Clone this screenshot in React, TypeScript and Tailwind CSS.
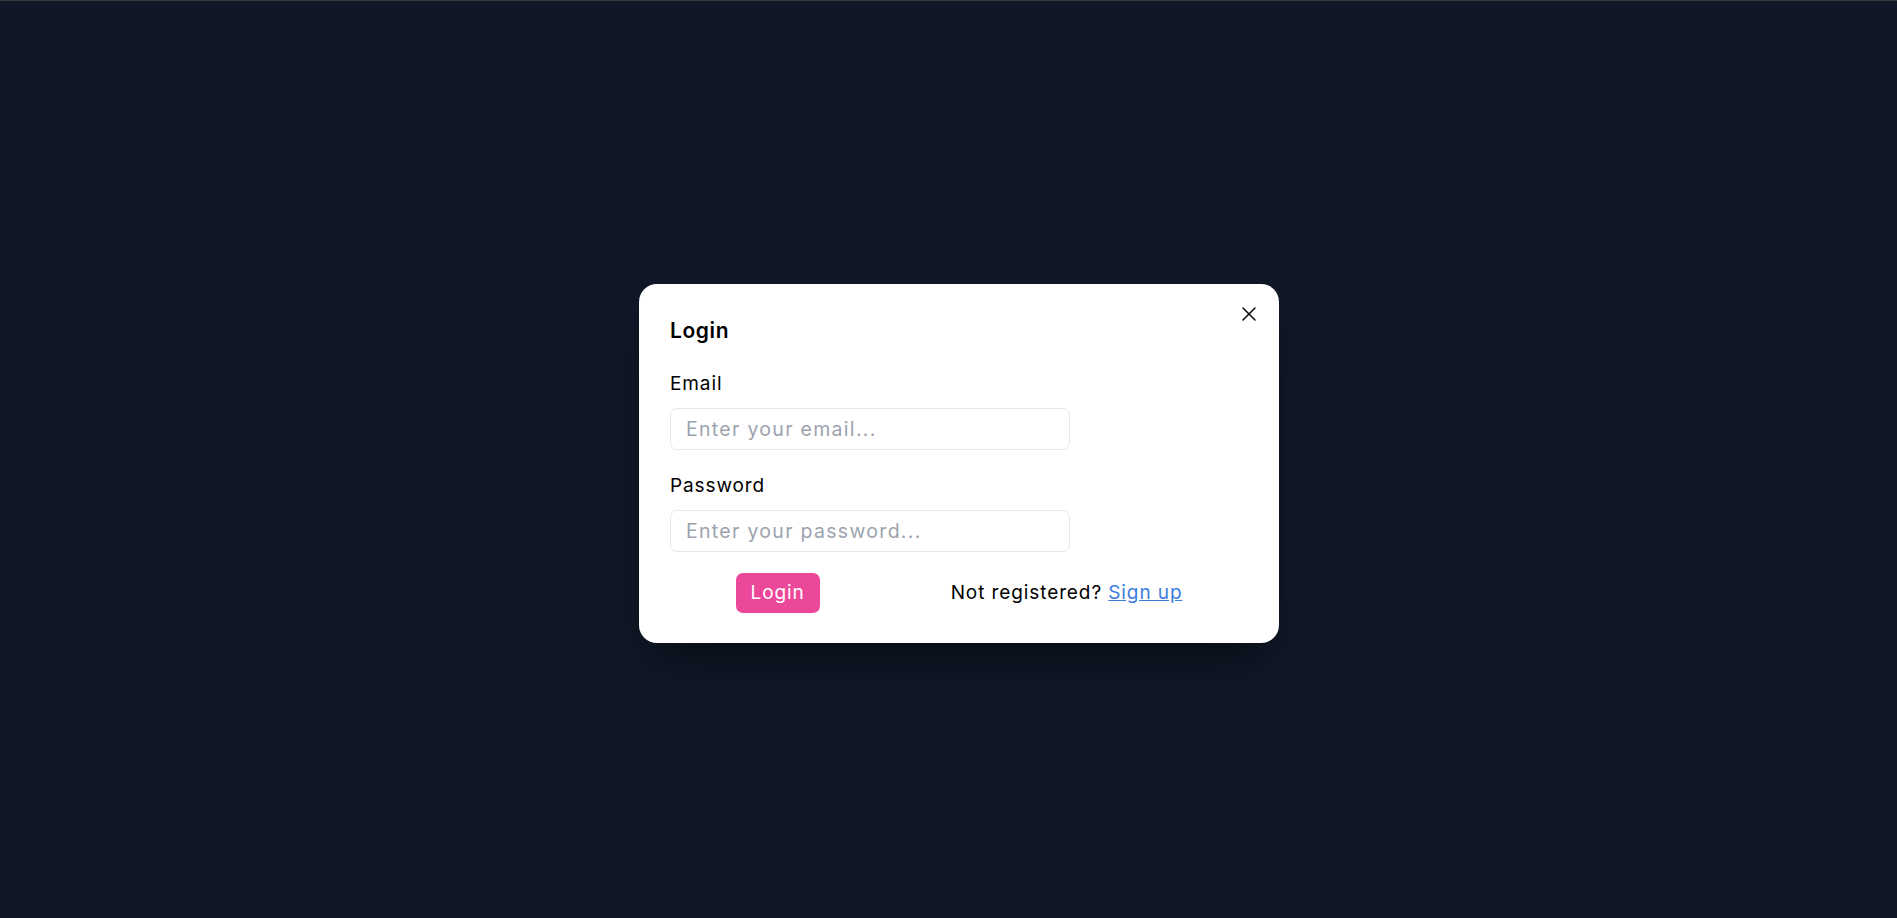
import React from "react";

function CloseIcon() {
  return (
    <svg width="16" height="16" viewBox="0 0 16 16" fill="none" stroke="#111111" strokeWidth="1.6" strokeLinecap="round">
      <path d="M2 2 L14 14" />
      <path d="M14 2 L2 14" />
    </svg>
  );
}

export default function App() {
  return (
    <div
      className="min-h-screen w-full bg-[#101828] flex flex-col"
      style={{ fontFamily: '"Inter", "Open Sans", sans-serif' }}
    >
      <div className="h-px w-full bg-[#3a3a3a]" />
      <div className="flex-1 flex items-center justify-center pl-[21px] pt-[7px]">
        <div className="relative w-[640px] bg-white rounded-[18px] px-[31px] pt-[31px] pb-[30px] shadow-[0_25px_50px_-12px_rgba(0,0,0,0.55)]">
          <button className="absolute top-[22px] right-[22px] w-[16px] h-[16px] flex items-center justify-center">
            <CloseIcon />
          </button>
          <h2 className="text-[21px] leading-[31px] font-semibold text-black tracking-[0.6px]">Login</h2>
          <div className="mt-[22px] flex flex-col">
            <label className="text-[19px] leading-[31px] text-black tracking-[0.9px]">Email</label>
            <input
              type="email"
              placeholder="Enter your email..."
              className="mt-[9px] w-[400px] h-[42px] rounded-[7px] border border-[#e5e7eb] px-[15px] text-[19.5px] tracking-[1.3px] text-black placeholder:text-[#9ca3af] outline-none"
            />
            <label className="mt-[20px] text-[19px] leading-[31px] text-black tracking-[0.9px]">Password</label>
            <input
              type="password"
              placeholder="Enter your password..."
              className="mt-[9px] w-[400px] h-[42px] rounded-[7px] border border-[#e5e7eb] px-[15px] text-[19.5px] tracking-[1.3px] text-black placeholder:text-[#9ca3af] outline-none"
            />
          </div>
          <div className="mt-[21px] flex items-center justify-around">
            <button className="h-[40px] w-[84px] rounded-[7px] bg-[#ec4899] text-white text-[19px] leading-[31px] tracking-[0.9px]">
              Login
            </button>
            <p className="text-[19px] leading-[31px] text-black tracking-[0.9px]">
              Not registered?{" "}
              <a href="#" className="text-[#3b7ddd] underline">
                Sign up
              </a>
            </p>
          </div>
        </div>
      </div>
    </div>
  );
}
